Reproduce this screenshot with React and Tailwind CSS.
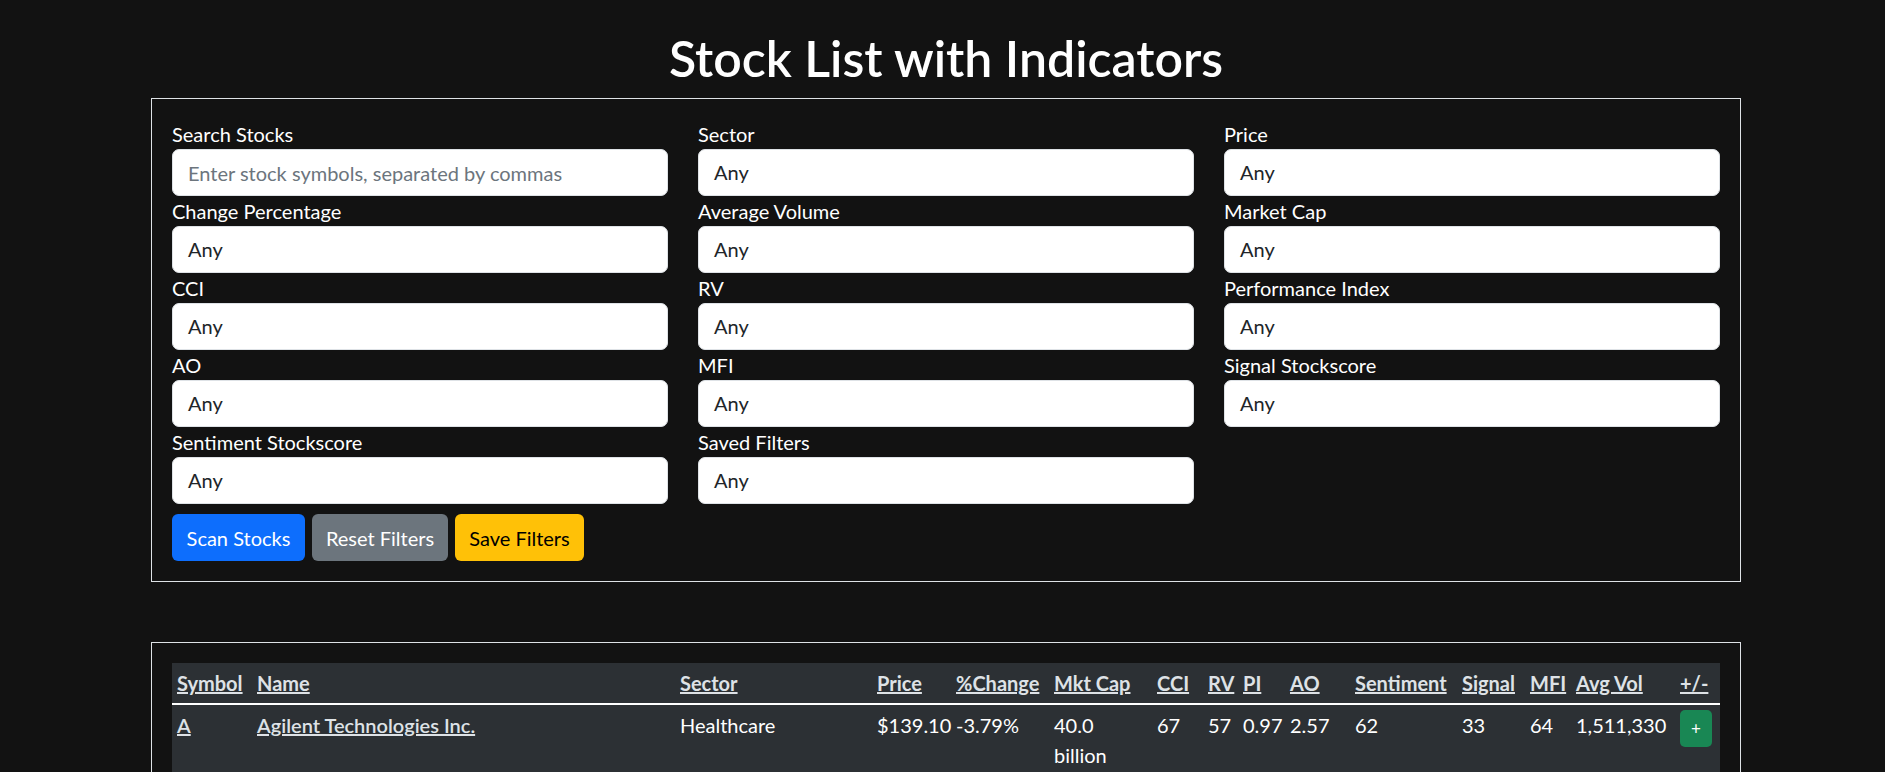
// Stock screener page: filter panel + results table
const fields = [
  { label: "Search Stocks", placeholder: "Enter stock symbols, separated by commas" },
  { label: "Sector" },
  { label: "Price" },
  { label: "Change Percentage" },
  { label: "Average Volume" },
  { label: "Market Cap" },
  { label: "CCI" },
  { label: "RV" },
  { label: "Performance Index" },
  { label: "AO" },
  { label: "MFI" },
  { label: "Signal Stockscore" },
  { label: "Sentiment Stockscore" },
  { label: "Saved Filters" },
];

const columns = [
  { title: "Symbol", w: "w-[80px]" },
  { title: "Name", w: "w-[423px]" },
  { title: "Sector", w: "w-[197px]" },
  { title: "Price", w: "w-[79px]" },
  { title: "%Change", w: "w-[98px]" },
  { title: "Mkt Cap", w: "w-[103px]" },
  { title: "CCI", w: "w-[51px]" },
  { title: "RV", w: "w-[35px]" },
  { title: "PI", w: "w-[47px]" },
  { title: "AO", w: "w-[65px]" },
  { title: "Sentiment", w: "w-[107px]" },
  { title: "Signal", w: "w-[68px]" },
  { title: "MFI", w: "w-[46px]" },
  { title: "Avg Vol", w: "w-[104px]" },
  { title: "+/-", w: "w-[45px]" },
];

const rows = [
  {
    symbol: "A",
    name: "Agilent Technologies Inc.",
    sector: "Healthcare",
    price: "$139.10",
    change: "-3.79%",
    cap: "40.0 billion",
    cci: "67",
    rv: "57",
    pi: "0.97",
    ao: "2.57",
    sentiment: "62",
    signal: "33",
    mfi: "64",
    vol: "1,511,330",
  },
];

function Field({ label, placeholder }) {
  return (
    <div className="flex flex-col">
      <label className="h-[30px] leading-[30px] text-[20px] text-white">{label}</label>
      {placeholder ? (
        <input
          type="text"
          placeholder={placeholder}
          className="h-[47px] rounded-[7px] border border-[#dee2e6] bg-white px-[15px] text-[20px] text-[#212529] placeholder:text-[#6c757d] outline-none"
        />
      ) : (
        <div className="h-[47px] rounded-[7px] border border-[#dee2e6] bg-white px-[15px] text-[20px] leading-[45px] text-[#212529]">
          Any
        </div>
      )}
    </div>
  );
}

export default function App() {
  const td = "px-[5px] py-[5px] align-top leading-[30px]";
  const link = "font-semibold text-[#dee2e6] underline";

  return (
    <div className="min-h-screen bg-[#121212] font-['Lato',sans-serif] text-white">
      <div className="ml-[151px] w-[1590px] pt-[28px] pb-10">
        <h1 className="mb-[10px] text-center text-[50px] font-semibold leading-[60px]">
          Stock List with Indicators
        </h1>

        {/* 필터 패널 */}
        <div className="border border-[#dee2e6] p-[20px]">
          <div className="grid grid-cols-3 gap-x-[30px]">
            {fields.map((f) => (
              <Field key={f.label} label={f.label} placeholder={f.placeholder} />
            ))}
          </div>
          <div className="mt-[10px] flex gap-[7px]">
            <button className="h-[47px] w-[133px] rounded-[6px] bg-[#0d6efd] text-[20px] text-white">
              Scan Stocks
            </button>
            <button className="h-[47px] w-[136px] rounded-[6px] bg-[#6c757d] text-[20px] text-white">
              Reset Filters
            </button>
            <button className="h-[47px] w-[129px] rounded-[6px] bg-[#ffc107] text-[20px] text-black">
              Save Filters
            </button>
          </div>
        </div>

        {/* 결과 테이블 */}
        <div className="mt-[60px] border border-[#dee2e6] p-[20px]">
          <table className="w-full table-fixed border-collapse text-left text-[20px]">
            <colgroup>
              {columns.map((c) => (
                <col key={c.title} className={c.w} />
              ))}
            </colgroup>
            <thead className="bg-[#2c3034]">
              <tr className="border-b-2 border-white">
                {columns.map((c) => (
                  <th key={c.title} className={`${td} whitespace-nowrap font-bold`}>
                    <a href="#" className="text-[#dee2e6] underline">
                      {c.title}
                    </a>
                  </th>
                ))}
              </tr>
            </thead>
            <tbody className="bg-[#2c3034]">
              {rows.map((r) => (
                <tr key={r.symbol}>
                  <td className={td}>
                    <a href="#" className={link}>{r.symbol}</a>
                  </td>
                  <td className={td}>
                    <a href="#" className={link}>{r.name}</a>
                  </td>
                  <td className={td}>{r.sector}</td>
                  <td className={`${td} whitespace-nowrap`}>{r.price}</td>
                  <td className={`${td} whitespace-nowrap`}>{r.change}</td>
                  <td className={td}>{r.cap}</td>
                  <td className={td}>{r.cci}</td>
                  <td className={td}>{r.rv}</td>
                  <td className={`${td} whitespace-nowrap`}>{r.pi}</td>
                  <td className={td}>{r.ao}</td>
                  <td className={td}>{r.sentiment}</td>
                  <td className={td}>{r.signal}</td>
                  <td className={td}>{r.mfi}</td>
                  <td className={`${td} whitespace-nowrap`}>{r.vol}</td>
                  <td className={td}>
                    <button className="h-[37px] w-[32px] rounded-[5px] bg-[#198754] text-[17px] leading-none text-white">
                      +
                    </button>
                  </td>
                </tr>
              ))}
            </tbody>
          </table>
        </div>
      </div>
    </div>
  );
}
